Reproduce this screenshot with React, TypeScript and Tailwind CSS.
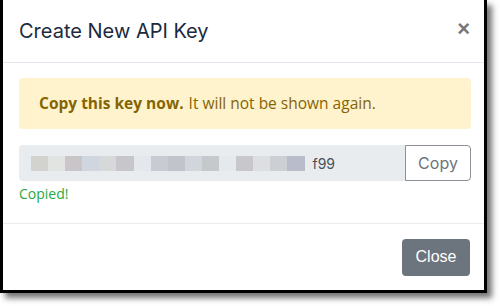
import React from "react";

const blocks = [
  "#d2d2ce", "#e2e4e2", "#c9c5c9", "#d0d6e0", "#d6d8da", "#c7c7cb", "#e4e8ec", "#c9cbd3",
  "#c1c4cb", "#d1d5dc", "#c6c9cc", "#e5e8ec", "#c8c8cc", "#dddee1", "#ccd0d4", "#b9bdcb",
];

export default function App() {
  return (
    <div className="w-[500px] h-[306px] bg-white overflow-hidden">
      <div className="w-[487px] h-[293px] bg-white border-l-[3px] border-r-[3px] border-b-[3px] border-black shadow-[5px_5px_6px_rgba(0,0,0,0.55)] flex flex-col">
        <div className="h-[63px] flex-none border-b border-[#e3e8ee] flex items-center justify-between pl-[16px] pr-[14px]">
          <span className="text-[20px] leading-none text-[#1b2a3f] font-['Inter',sans-serif]">
            Create New API Key
          </span>
          <span className="text-[22px] leading-none font-bold text-[#777] font-['Liberation_Sans',sans-serif] -mt-[4px]">
            ×
          </span>
        </div>
        <div className="h-[160px] flex-none pt-[15px] pl-[16px] pr-[13px] flex flex-col">
          <div className="h-[51px] bg-[#fff3cd] rounded-[4px] flex items-center pl-[20px] text-[15.5px] text-[#856404] font-['Open_Sans',sans-serif]">
            <span className="font-bold">Copy this key now.</span>
            <span className="ml-[5px]">It will not be shown again.</span>
          </div>
          <div className="mt-[16px] h-[36px] flex">
            <div className="w-[386px] bg-[#e9ecef] rounded-l-[4px] flex items-center pl-[12px]">
              <div className="flex h-[15px]">
                {blocks.map((c, i) => (
                  <div key={i} className="w-[17.1px] h-full" style={{ backgroundColor: c }} />
                ))}
              </div>
              <span className="ml-[8px] text-[14px] text-[#495057] font-['Inter',sans-serif]">f99</span>
            </div>
            <button className="w-[66px] h-[36px] bg-white border border-[#8a9096] rounded-r-[4px] text-[16px] text-[#6c757d] font-['Inter',sans-serif] flex items-center justify-center">
              Copy
            </button>
          </div>
          <div className="mt-[3px] text-[14px] leading-[20px] text-[#28a745] font-['Open_Sans',sans-serif]">
            Copied!
          </div>
        </div>
        <div className="flex-1 border-t border-[#e9ecef] flex items-center justify-end pr-[14px]">
          <button className="w-[68px] h-[37px] bg-[#6c757d] rounded-[4px] text-white text-[16px] font-['Liberation_Sans',sans-serif] flex items-center justify-center">
            Close
          </button>
        </div>
      </div>
    </div>
  );
}
